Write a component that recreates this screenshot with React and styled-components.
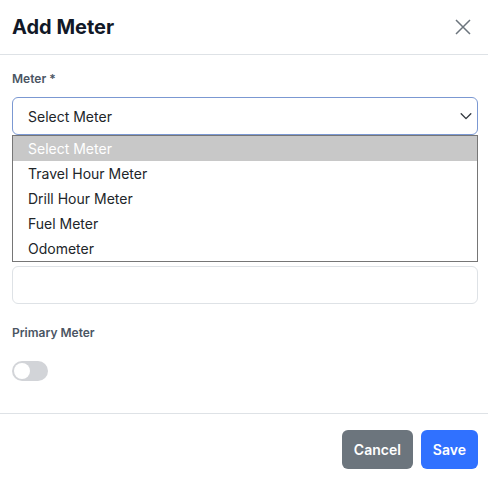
import { styled, createGlobalStyle } from 'styled-components';

const GlobalStyle = createGlobalStyle`
  * { box-sizing: border-box; }
  body {
    margin: 0;
    background: #ffffff;
    font-family: Inter, "Noto Sans", sans-serif;
    color: #212529;
  }
`;

const Modal = styled.div`
  width: 488px;
  background: #fff;
`;

const Header = styled.div`
  height: 55px;
  padding: 0 12px;
  display: flex;
  align-items: center;
  justify-content: space-between;
  border-bottom: 1px solid #dee2e6;
`;

const Title = styled.h2`
  margin: 0;
  font-size: 20px;
  font-weight: 700;
  color: #111827;
  line-height: 1;
  padding-bottom: 1px;
`;

const CloseButton = styled.button`
  border: 0;
  background: none;
  padding: 0;
  width: 20px;
  height: 20px;
  margin-right: 3px;
  display: flex;
  align-items: center;
  justify-content: center;
  color: #6c757d;
  cursor: pointer;
`;

const Body = styled.div`
  padding: 15px 10px 12.5px 12px;
`;

const Group = styled.div`
  position: relative;
  margin-bottom: 19.5px;
`;

const Label = styled.label`
  display: block;
  min-height: 18px;
  font-size: 12px;
  line-height: 18px;
  font-weight: 600;
  color: #4b5563;
  margin-bottom: ${(p) => p.$gap || 9}px;
`;

const SelectBox = styled.div`
  height: 38px;
  border: 1px solid #7b98d2;
  border-radius: 6px;
  padding: 0 4px 0 15px;
  display: flex;
  align-items: center;
  justify-content: space-between;
  font-size: 14px;
  color: #212529;
`;

const Input = styled.div`
  height: 38px;
  border: 1px solid #dee2e6;
  border-radius: 6px;
`;

const List = styled.ul`
  position: absolute;
  left: 0;
  right: 0;
  top: 65px;
  margin: 0;
  padding: 0;
  list-style: none;
  background: #fff;
  border: 1px solid #767676;
  z-index: 2;
`;

const Option = styled.li`
  height: 25px;
  line-height: 25px;
  padding-left: 15px;
  font-size: 14px;
  color: ${(p) => (p.$active ? '#ffffff' : '#212529')};
  background: ${(p) => (p.$active ? '#c8c8c8' : 'transparent')};
`;

const Switch = styled.div`
  width: 36px;
  height: 20px;
  border-radius: 10px;
  background: #d2d4d8;
  position: relative;

  &::after {
    content: '';
    position: absolute;
    left: 2px;
    top: 2px;
    width: 16px;
    height: 16px;
    border-radius: 50%;
    background: #fff;
  }
`;

const Footer = styled.div`
  border-top: 1px solid #dee2e6;
  padding: 16px 10px;
  display: flex;
  justify-content: flex-end;
  gap: 8px;
`;

const Button = styled.button`
  height: 39px;
  padding: 0 12px;
  border: 0;
  border-radius: 6px;
  font-family: Inter, "Noto Sans", sans-serif;
  font-size: 14px;
  font-weight: 600;
  color: #fff;
  background: ${(p) => (p.$variant === 'primary' ? '#3071ff' : '#6c757d')};
`;

const options = ['Select Meter', 'Travel Hour Meter', 'Drill Hour Meter', 'Fuel Meter', 'Odometer'];

export default function App() {
  return (
    <Modal>
      <GlobalStyle />
      <Header>
        <Title>Add Meter</Title>
        <CloseButton aria-label="Close">
          <svg width="16" height="16" viewBox="0 0 16 16" fill="none" stroke="currentColor" strokeWidth="1.5">
            <path d="M1 1L15 15M15 1L1 15" />
          </svg>
        </CloseButton>
      </Header>
      <Body>
        <Group>
          <Label>Meter *</Label>
          <SelectBox>
            <span>Select Meter</span>
            <svg width="14" height="14" viewBox="0 0 16 16" fill="none" stroke="#343a40" strokeWidth="1.6" strokeLinecap="round" strokeLinejoin="round">
              <path d="M2.5 5.5l5.5 5.5 5.5-5.5" />
            </svg>
          </SelectBox>
          <List>
            {options.map((o, i) => (
              <Option key={o} $active={i === 0}>{o}</Option>
            ))}
          </List>
        </Group>
        {/* labels of these two fields sit under the open list */}
        <Group>
          <Label />
          <Input />
        </Group>
        <Group>
          <Label />
          <Input />
        </Group>
        <Group>
          <Label $gap={19.5}>Primary Meter</Label>
          <Switch />
        </Group>
      </Body>
      <Footer>
        <Button>Cancel</Button>
        <Button $variant="primary">Save</Button>
      </Footer>
    </Modal>
  );
}
